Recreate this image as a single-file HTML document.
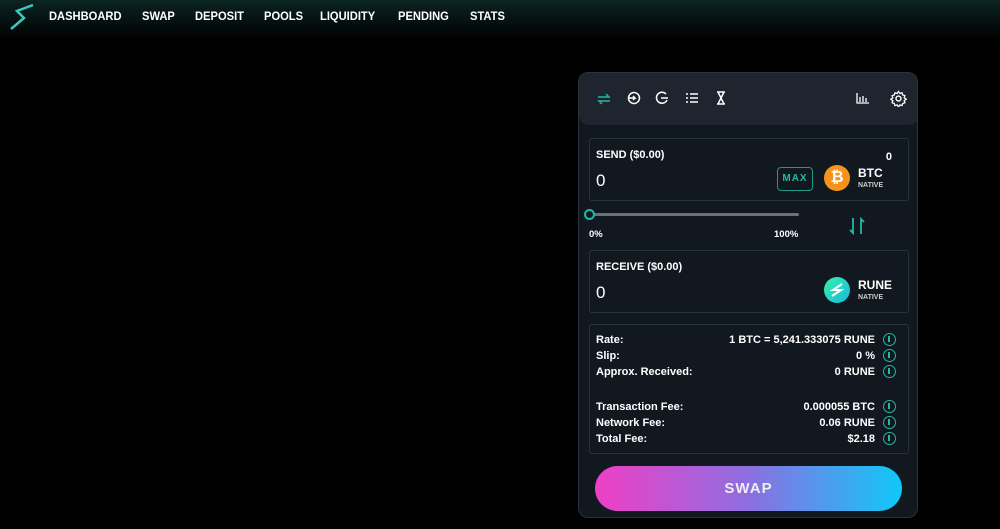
<!DOCTYPE html><html><head><style>
*{margin:0;padding:0;box-sizing:border-box}
body{width:1000px;height:529px;background:#000;font-family:"Liberation Sans",sans-serif;color:#fff;position:relative;overflow:hidden}
.nav{position:absolute;left:0;top:0;width:1000px;height:40px;background:linear-gradient(#0b2422,#000)}
.nav span{position:absolute;top:9px;font-size:12px;font-weight:bold;transform:scaleX(0.93);transform-origin:left}
.card{position:absolute;left:578px;top:72px;width:340px;height:446px;background:#121820;border:1px solid #2a323c;border-radius:10px;overflow:hidden}
.hd{position:absolute;left:0;top:0;width:340px;height:52px;background:#1e252f;border-radius:0 0 10px 10px}
.box{position:absolute;left:10px;width:320px;border:1px solid #2a323c;border-radius:3px}
.t{position:absolute;font-size:11px;font-weight:bold}
.row{position:absolute;left:6px;right:6px;font-size:11px;font-weight:bold;height:16px}
.row b{position:absolute;right:27px}
.row i{position:absolute;right:6px;top:-1px;width:13px;height:13px;border:1.5px solid #23b8a0;border-radius:50%}
.row i:after{content:"";position:absolute;left:4px;top:2px;width:2px;height:6px;background:#23b8a0}
</style></head><body>
<div class="nav">
<svg style="position:absolute;left:8px;top:2px" width="28" height="30" viewBox="0 0 28 30"><path d="M25 3 L9 9 L16 16 L3 27" stroke="#3cc7c0" stroke-width="2.5" fill="none"/></svg>
<span style="left:49px">DASHBOARD</span><span style="left:142px">SWAP</span><span style="left:195px">DEPOSIT</span><span style="left:264px">POOLS</span><span style="left:320px">LIQUIDITY</span><span style="left:398px">PENDING</span><span style="left:470px">STATS</span>
</div>
<div class="card">
<div class="hd">
<svg style="position:absolute;left:18px;top:20px" width="14" height="12"><path d="M1 4h11l-3-3M13 8H2l3 3" stroke="#23b8a0" stroke-width="1.5" fill="none"/></svg>
<svg style="position:absolute;left:48px;top:18px" width="14" height="14"><circle cx="7" cy="7" r="5.5" stroke="#fff" stroke-width="1.5" fill="none"/><path d="M1 7h7l-2-2M8 7l-2 2" stroke="#fff" stroke-width="1.5" fill="none"/></svg>
<svg style="position:absolute;left:76px;top:18px" width="14" height="14"><path d="M11 3A5.5 5.5 0 1 0 12 9" stroke="#fff" stroke-width="1.5" fill="none"/><path d="M6 7h7" stroke="#fff" stroke-width="1.5"/></svg>
<svg style="position:absolute;left:106px;top:19px" width="14" height="12"><path d="M1 2h2M5 2h8M1 6h2M5 6h8M1 10h2M5 10h8" stroke="#fff" stroke-width="1.5"/></svg>
<svg style="position:absolute;left:137px;top:18px" width="10" height="14"><path d="M1 1h8M1 13h8M2 1l6 12M8 1L2 13" stroke="#fff" stroke-width="1.5" fill="none"/></svg>
<svg style="position:absolute;left:277px;top:20px" width="13" height="11"><path d="M1 0v10h12M4 4v5M7 3v6M10 5v4" stroke="#fff" stroke-width="1.3" fill="none"/></svg>
<svg style="position:absolute;left:311px;top:17px" width="17" height="17" viewBox="0 0 24 24"><circle cx="12" cy="12" r="3.5" stroke="#fff" stroke-width="2" fill="none"/><path d="M12 2l2 3 3-1 1 3 3 1-1 3 3 2-3 2 1 3-3 1-1 3-3-1-2 3-2-3-3 1-1-3-3-1 1-3-3-2 3-2-1-3 3-1 1-3 3 1z" stroke="#fff" stroke-width="1.8" fill="none"/></svg>
</div>
<div class="box" style="top:65px;height:63px">
<div class="t" style="left:6px;top:10px">SEND ($0.00)</div>
<div style="position:absolute;left:6px;top:32px;font-size:17px">0</div>
<div class="t" style="right:16px;top:12px">0</div>
<div style="position:absolute;left:187px;top:28px;width:36px;height:24px;border:1.5px solid #1d9a8a;border-radius:4px;color:#23b8a0;font-size:10px;font-weight:bold;text-align:center;line-height:21px;letter-spacing:1px">MAX</div>
<div style="position:absolute;left:234px;top:26px;width:26px;height:26px;border-radius:50%;background:#f7931a;text-align:center;font-weight:bold;font-size:16px;line-height:26px">₿</div>
<div style="position:absolute;left:268px;top:27px;font-size:12px;font-weight:bold">BTC</div>
<div style="position:absolute;left:268px;top:43px;font-size:7px;font-weight:bold;color:#ccc">NATIVE</div>
</div>
<div style="position:absolute;left:12px;top:140px;width:208px;height:3px;background:#6b7178;border-radius:2px"></div>
<div style="position:absolute;left:5px;top:136px;width:11px;height:11px;border:2px solid #23b8a0;border-radius:50%;background:#121820"></div>
<div class="t" style="left:10px;top:156px;font-size:9.5px">0%</div>
<div class="t" style="left:195px;top:156px;font-size:9.5px">100%</div>
<svg style="position:absolute;left:270px;top:144px" width="16" height="18"><path d="M4 1v15l-3-3M12 17V2l3 3" stroke="#23b8a0" stroke-width="1.8" fill="none"/></svg>
<div class="box" style="top:177px;height:63px">
<div class="t" style="left:6px;top:10px">RECEIVE ($0.00)</div>
<div style="position:absolute;left:6px;top:32px;font-size:17px">0</div>
<div style="position:absolute;left:234px;top:26px;width:26px;height:26px;border-radius:50%;background:linear-gradient(135deg,#33f2b0,#19b8d8)"><svg width="26" height="26"><path d="M18 7l-9 6h8l-9 6" stroke="#fff" stroke-width="2" fill="none"/></svg></div>
<div style="position:absolute;left:268px;top:27px;font-size:12px;font-weight:bold">RUNE</div>
<div style="position:absolute;left:268px;top:43px;font-size:7px;font-weight:bold;color:#ccc">NATIVE</div>
</div>
<div class="box" style="top:251px;height:130px">
<div class="row" style="top:9px">Rate:<b>1 BTC = 5,241.333075 RUNE</b><i></i></div>
<div class="row" style="top:25px">Slip:<b>0 %</b><i></i></div>
<div class="row" style="top:41px">Approx. Received:<b>0 RUNE</b><i></i></div>
<div class="row" style="top:76px">Transaction Fee:<b>0.000055 BTC</b><i></i></div>
<div class="row" style="top:92px">Network Fee:<b>0.06 RUNE</b><i></i></div>
<div class="row" style="top:108px">Total Fee:<b>$2.18</b><i></i></div>
</div>
<div style="position:absolute;left:16px;top:393px;width:307px;height:45px;border-radius:23px;background:linear-gradient(90deg,#f03fc6,#8d6ee0,#10c8f8);text-align:center;line-height:45px;font-size:15px;font-weight:bold;letter-spacing:1px;color:#eee">SWAP</div>
</div>
</body></html>
